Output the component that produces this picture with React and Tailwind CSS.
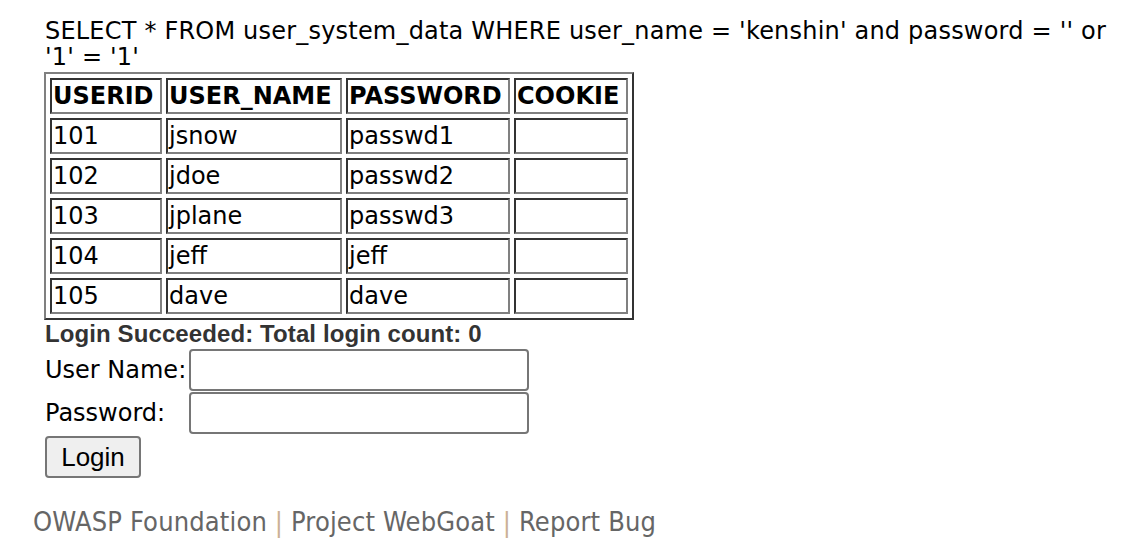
import React from "react";

const rows = [
  ["101", "jsnow", "passwd1"],
  ["102", "jdoe", "passwd2"],
  ["103", "jplane", "passwd3"],
  ["104", "jeff", "jeff"],
  ["105", "dave", "dave"],
];

const cell =
  "border-2 border-t-[#333] border-l-[#333] border-b-[#808080] border-r-[#808080] px-[1px] py-0 text-left align-middle h-[36px] whitespace-nowrap";

export default function App() {
  return (
    <div className="bg-white w-[1124px] h-[549px] overflow-hidden text-black">
      <div className="pl-[45px] pr-[10px] pt-[18px] font-['DejaVu_Sans',Verdana,sans-serif] text-[24px] leading-[26px]">
        <div className="tracking-[0.2px]">SELECT * FROM user_system_data WHERE user_name = 'kenshin' and password = '' or '1' = '1'</div>
        <table className="ml-[-1px] mt-[2px] border-separate border-spacing-[4px] border-2 border-t-[#808080] border-l-[#808080] border-b-[#333] border-r-[#333]">
          <tbody>
            <tr>
              <th className={cell + " w-[112px] font-bold"}>USERID</th>
              <th className={cell + " w-[176px] font-bold"}>USER_NAME</th>
              <th className={cell + " w-[164px] font-bold"}>PASSWORD</th>
              <th className={cell + " w-[114px] font-bold"}>COOKIE</th>
            </tr>
            {rows.map((r) => (
              <tr key={r[0]}>
                <td className={cell}>{r[0]}</td>
                <td className={cell}>{r[1]}</td>
                <td className={cell}>{r[2]}</td>
                <td className={cell}></td>
              </tr>
            ))}
          </tbody>
        </table>
        <div className="font-['Liberation_Sans',Arial,sans-serif] font-bold text-[24px] leading-[28px] text-[#333] tracking-[0.1px]">
          Login Succeeded: Total login count: 0
        </div>
        <div className="flex items-center h-[42px] mt-[1px]">
          <span className="w-[144px]">User Name:</span>
          <input className="w-[340px] h-[42px] border-2 border-[#767676] rounded-[4px] bg-white" />
        </div>
        <div className="flex items-center h-[42px] mt-[1px]">
          <span className="w-[144px]">Password:</span>
          <input type="password" className="w-[340px] h-[42px] border-2 border-[#767676] rounded-[4px] bg-white" />
        </div>
        <button className="mt-[2px] w-[96px] h-[42px] border-2 border-[#767676] rounded-[4px] bg-[#efefef] font-['Liberation_Sans',Arial,sans-serif] text-[26px] leading-[26px] text-black">
          Login
        </button>
      </div>
      <div className="pl-[33px] mt-[30px] font-['DejaVu_Sans_Condensed','DejaVu_Sans',sans-serif] text-[27px] text-[#666] leading-[28px] tracking-[0.15px]">
        OWASP Foundation <span className="text-[#cbb196]">|</span> Project WebGoat{" "}
        <span className="text-[#cbb196]">|</span> Report Bug
      </div>
    </div>
  );
}
